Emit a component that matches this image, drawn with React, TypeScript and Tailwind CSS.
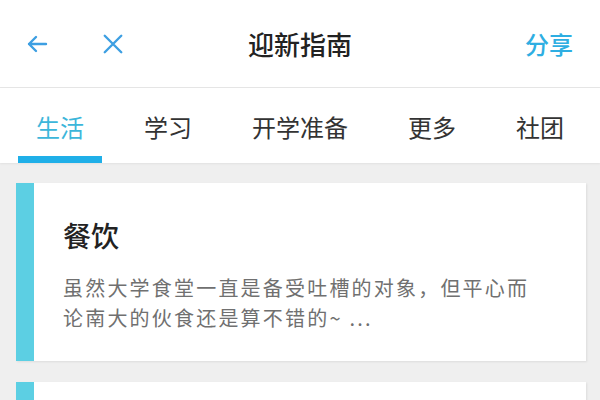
import { useState } from "react";

const tabs = ["生活", "学习", "开学准备", "更多", "社团"];

const cards = [
  {
    title: "餐饮",
    body: "虽然大学食堂一直是备受吐槽的对象，但平心而论南大的伙食还是算不错的~ ...",
  },
];

export default function App() {
  const [active, setActive] = useState(0);

  return (
    <div className="h-[400px] w-[600px] overflow-hidden bg-[#efefef] font-['Noto_Sans_CJK_SC',sans-serif]">
      <header className="grid h-[88px] grid-cols-[1fr_auto_1fr] items-center border-b border-[#e6e6e6] bg-white">
        <div className="flex items-center gap-[52px] pl-[24px]">
          <BackIcon />
          <CloseIcon />
        </div>
        <h1 className="text-[26px] font-medium text-[#222]">迎新指南</h1>
        <div className="flex justify-end pr-[27px]">
          <button className="text-[24px] font-medium text-[#2eaee2]">分享</button>
        </div>
      </header>

      <nav className="flex h-[75px] gap-[24px] bg-white pl-[18px] shadow-[0_1px_2px_rgba(0,0,0,0.06)]">
        {tabs.map((tab, i) => (
          <button key={tab} onClick={() => setActive(i)} className="flex flex-col">
            <span className={`flex-1 px-[18px] pt-[22px] text-[24px] leading-[34px] ${i === active ? "text-[#3cb6da]" : "text-[#333]"}`}>
              {tab}
            </span>
            <span className={`h-[7px] w-full ${i === active ? "bg-[#1fafe8]" : "bg-transparent"}`} />
          </button>
        ))}
      </nav>

      <div className="flex flex-col gap-[21px] pt-[20px] pl-[16px] pr-[14px]">
        {cards.map((card) => (
          <div key={card.title} className="flex h-[178px] shrink-0 bg-white shadow-[1px_1px_2px_rgba(0,0,0,0.08)]">
            <div className="w-[18px] shrink-0 bg-[#5ccfe3]" />
            <div className="pt-[32px] pl-[29px]">
              <h2 className="text-[28px] font-medium leading-[40px] text-[#222]">{card.title}</h2>
              <p className="mt-[18px] w-[478px] text-[20px] leading-[30px] tracking-[2.2px] text-[#707070]">{card.body}</p>
            </div>
          </div>
        ))}
        <div className="flex h-[178px] shrink-0 bg-white shadow-[1px_1px_2px_rgba(0,0,0,0.08)]">
          <div className="w-[18px] shrink-0 bg-[#5ccfe3]" />
        </div>
      </div>
    </div>
  );
}

function BackIcon() {
  return (
    <svg viewBox="0 0 24 24" className="h-[24px] w-[26px] fill-none stroke-[#3d9fe2] stroke-[2.4]">
      <path strokeLinecap="round" strokeLinejoin="round" d="M21 12H4m0 0 7-7m-7 7 7 7" />
    </svg>
  );
}

function CloseIcon() {
  return (
    <svg viewBox="0 0 24 24" className="h-[22px] w-[22px] fill-none stroke-[#3d9fe2] stroke-[2.6]">
      <path strokeLinecap="round" d="M3 3l18 18M21 3 3 21" />
    </svg>
  );
}
